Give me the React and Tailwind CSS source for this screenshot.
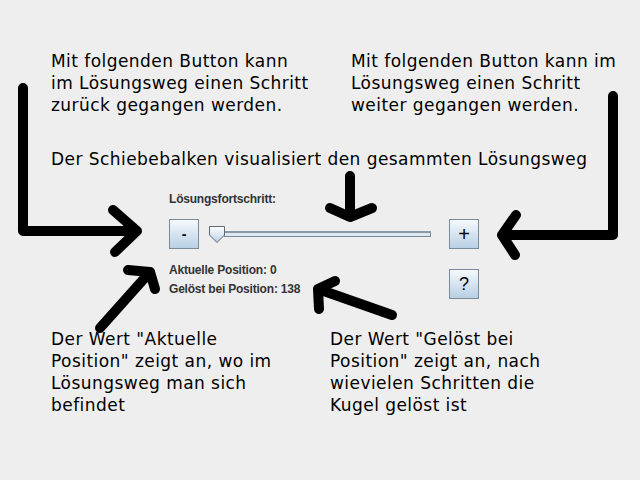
import React from "react";

const JavaButton = ({ children, className = "" }) => (
  <div
    className={`w-[30px] h-[30px] flex items-center justify-center border border-[#7a8a99] bg-gradient-to-b from-[#f6f9fc] to-[#b8cfe5] text-black ${className}`}
    style={{ fontFamily: "'Liberation Sans', Arial, sans-serif" }}
  >
    {children}
  </div>
);

const Slider = () => (
  <div className="w-[222px] flex items-center">
    <svg width="16" height="17" viewBox="0 0 16 17" className="shrink-0 relative z-10">
      <defs>
        <linearGradient id="thumb" x1="0" y1="0" x2="0" y2="1">
          <stop offset="0" stopColor="#ffffff" />
          <stop offset="1" stopColor="#b8cfe5" />
        </linearGradient>
      </defs>
      <path
        d="M0.5 0.5 H15.5 V9 L8 16.5 L0.5 9 Z"
        fill="url(#thumb)"
        stroke="#5f6770"
        strokeWidth="1"
      />
    </svg>
    <div className="flex-1 -ml-[1px] h-[6px] border border-[#7a8a99] bg-[#dfe7ef] border-t-[2px] border-t-[#8a99a8]" />
  </div>
);

const App = () => {
  return (
    <div
      className="relative w-[640px] h-[480px] bg-[#eeeeee] text-black overflow-hidden"
      style={{ fontFamily: "'DejaVu Sans', sans-serif" }}
    >
      <div className="pt-[50px] text-[17px] leading-[22px] tracking-[0.45px]">
        <div className="flex">
          <div className="w-[351px] pl-[51px]">
            Mit folgenden Button kann
            <br />
            im Lösungsweg einen Schritt
            <br />
            zurück gegangen werden.
          </div>
          <div>
            Mit folgenden Button kann im
            <br />
            Lösungsweg einen Schritt
            <br />
            weiter gegangen werden.
          </div>
        </div>

        <div className="mt-[32px] pl-[51px]">
          Der Schiebebalken visualisiert den gesammten Lösungsweg
        </div>
      </div>

      <div
        className="ml-[169px] mt-[22px] text-[12px] font-bold text-[#333333] tracking-[-0.2px]"
        style={{ fontFamily: "'Liberation Sans', Arial, sans-serif" }}
      >
        <div className="leading-[15px]">Lösungsfortschritt:</div>
        <div className="flex items-center mt-[12px]">
          <JavaButton className="text-[14px] font-bold">-</JavaButton>
          <div className="ml-[10px]">
            <Slider />
          </div>
          <JavaButton className="ml-[18px] text-[20px] font-normal">+</JavaButton>
        </div>
        <div className="flex items-start">
          <div className="w-[280px] mt-[12px] leading-[19px]">
            <div>Aktuelle Position: 0</div>
            <div>Gelöst bei Position: 138</div>
          </div>
          <JavaButton className="mt-[20px] text-[18px] font-normal">?</JavaButton>
        </div>
      </div>

      <div className="flex mt-[29px] text-[17px] leading-[22px] tracking-[0.45px]">
        <div className="w-[330px] pl-[51px]">
          Der Wert "Aktuelle
          <br />
          Position" zeigt an, wo im
          <br />
          Lösungsweg man sich
          <br />
          befindet
        </div>
        <div>
          Der Wert "Gelöst bei
          <br />
          Position" zeigt an, nach
          <br />
          wievielen Schritten die
          <br />
          Kugel gelöst ist
        </div>
      </div>

      <svg
        className="absolute inset-0 pointer-events-none"
        width="640"
        height="480"
        viewBox="0 0 640 480"
        fill="none"
        stroke="#000"
        strokeWidth="10"
        strokeLinecap="round"
        strokeLinejoin="round"
      >
        <path d="M23 88 V231 H137 M113 210 L137 231 L115 252" />
        <path d="M613 96 V235 H502 M516 215 L502 235 L515 255" />
        <path d="M350 176 V217 M330 208 L350 217 L372 208" />
        <path d="M100 328 L150 272 M128 270 L150 272 L155 289" />
        <path d="M392 315 L318 289 M335 281 L318 289 L319 309" />
      </svg>
    </div>
  );
};

export default App;
